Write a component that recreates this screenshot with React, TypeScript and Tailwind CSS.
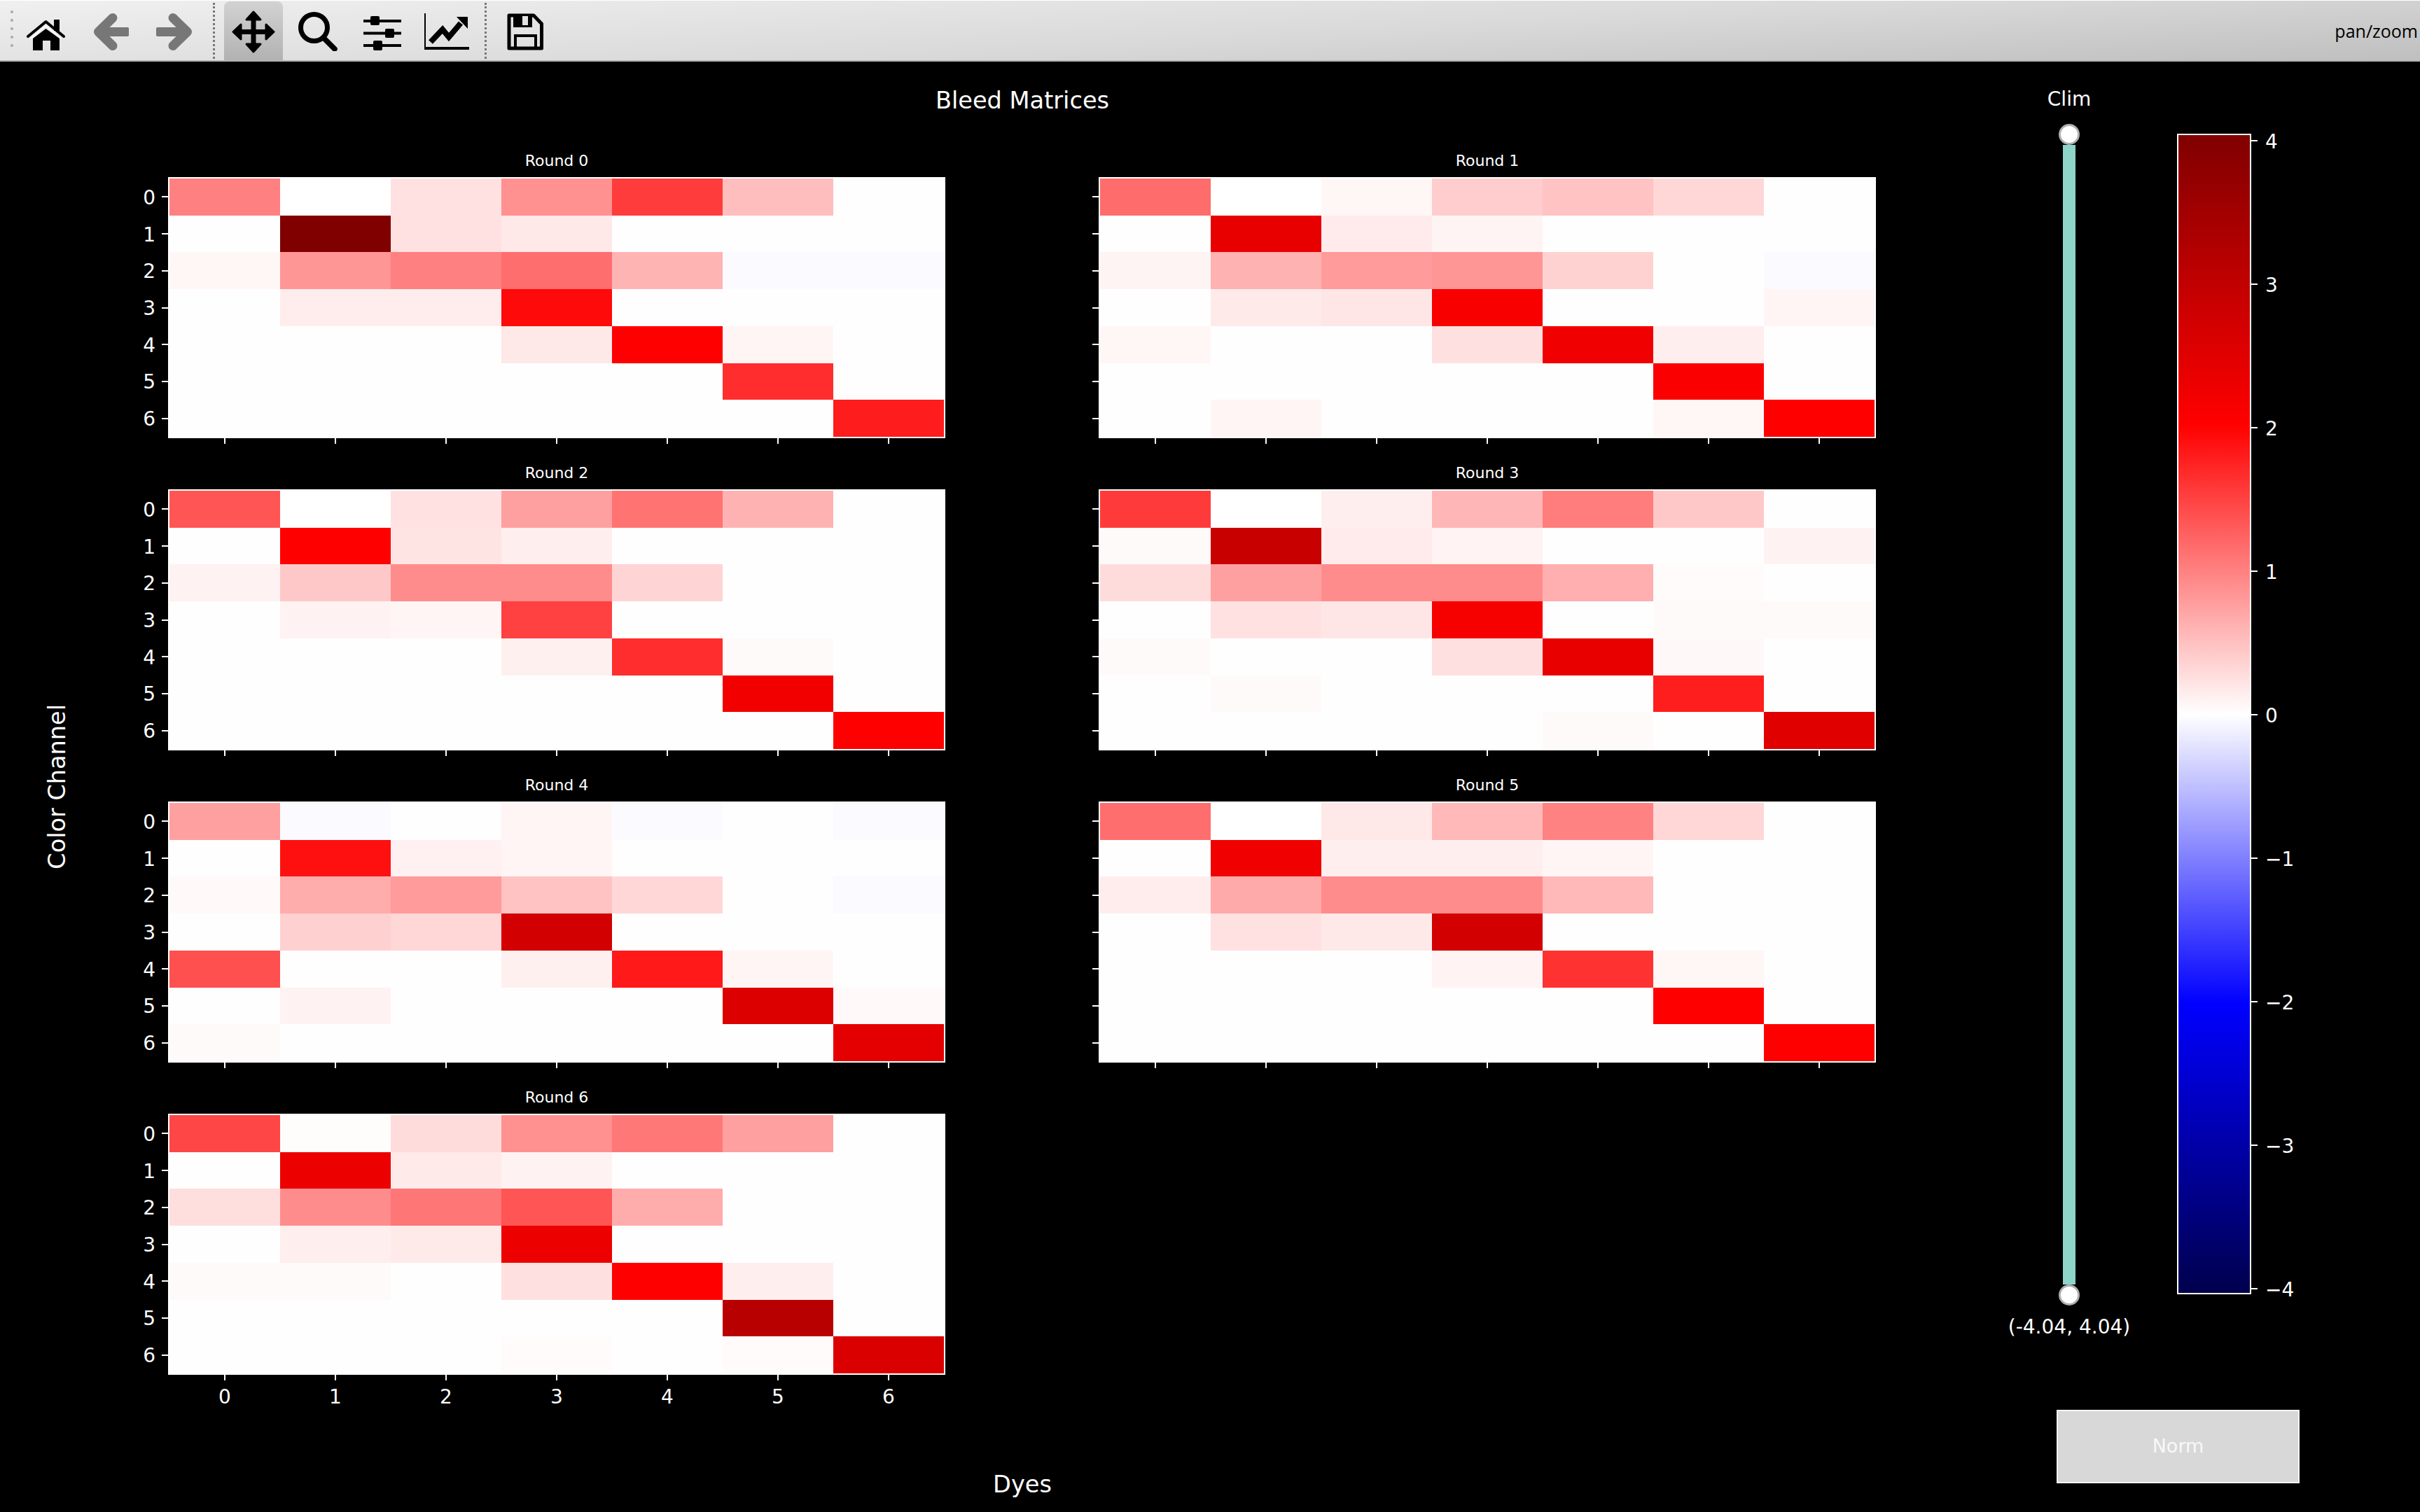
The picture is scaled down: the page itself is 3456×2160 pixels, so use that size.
import React from "react";

// cell codes: 0-255 = green/blue level of a red tint, negative = dark red channel, B = faint blue
const W = 254;
const B = 1000;

const rounds: number[][][] = [
  [
    [128, 255, 225, 145, 60, 190, W],
    [W, -128, 225, 232, W, W, W],
    [246, 150, 128, 110, 180, B, B],
    [W, 237, 237, 10, W, W, W],
    [W, W, W, 232, 0, 245, W],
    [W, W, W, W, W, 45, W],
    [W, W, W, W, W, W, 28],
  ],
  [
    [108, 255, 246, 205, 195, 215, W],
    [W, -232, 235, 244, W, W, W],
    [244, 178, 155, 150, 210, W, B],
    [W, 234, 230, -248, W, W, 245],
    [246, W, W, 224, -240, 238, W],
    [W, W, W, W, W, -250, W],
    [W, 245, W, W, W, 246, 0],
  ],
  [
    [85, 255, 225, 160, 115, 178, W],
    [W, 0, 228, 238, W, W, W],
    [242, 200, 140, 140, 212, W, W],
    [W, 242, 245, 65, W, W, W],
    [W, W, W, 240, 45, 250, W],
    [W, W, W, W, W, -242, W],
    [W, W, W, W, W, W, 0],
  ],
  [
    [58, 255, 238, 182, 125, 200, W],
    [250, -200, 235, 243, W, W, 242],
    [220, 160, 140, 140, 175, 251, W],
    [W, 225, 230, -246, W, 250, 250],
    [250, W, W, 224, -232, 248, W],
    [W, 250, W, W, W, 30, W],
    [W, W, W, W, 250, W, -224],
  ],
  [
    [160, B, W, 245, B, W, B],
    [W, 16, 241, 245, W, W, W],
    [249, 172, 155, 195, 215, W, B],
    [W, 208, 215, -210, W, W, W],
    [80, W, W, 240, 25, 245, W],
    [W, 242, W, W, W, -220, 249],
    [250, W, W, W, W, W, -228],
  ],
  [
    [110, 255, 232, 185, 130, 215, W],
    [W, -240, 238, 238, 245, W, W],
    [237, 170, 140, 140, 185, W, W],
    [W, 225, 232, -210, W, W, W],
    [W, W, W, 243, 50, 246, W],
    [W, W, W, W, W, 0, W],
    [W, W, W, W, W, W, 0],
  ],
  [
    [70, 252, 220, 145, 120, 160, W],
    [W, -236, 234, 242, W, W, W],
    [222, 140, 118, 85, 172, W, W],
    [W, 238, 234, -236, W, W, W],
    [250, 250, W, 224, 0, 238, W],
    [W, W, W, W, W, -184, W],
    [W, W, W, 251, W, 251, -218],
  ],
];

const idx = [0, 1, 2, 3, 4, 5, 6];
const barTicks = ["4", "3", "2", "1", "0", "−1", "−2", "−3", "−4"];

function cellColor(n: number) {
  if (n === B) return "#fafaff";
  if (n < 0) return `rgb(${-n},0,0)`;
  return `rgb(255,${n},${n})`;
}

function Plot({ round, yLabels, xLabels }: { round: number; yLabels: boolean; xLabels: boolean }) {
  return (
    <div className="flex flex-col">
      <div className="ml-[60px] h-[50px] w-[1110px] pt-[13px] text-center text-[22px] leading-[28px] text-white">
        Round {round}
      </div>
      <div className="flex h-[373px]">
        <div className="flex w-[60px] flex-col py-[2px]">
          {idx.map((i) => (
            <div key={i} className="flex flex-1 items-center justify-end">
              {yLabels && <span className="mr-[9px] pt-[3px] text-[28px] leading-none text-white">{i}</span>}
              <div className="h-[2px] w-[9px] bg-white" />
            </div>
          ))}
        </div>
        <div className="grid w-[1110px] grid-cols-7 grid-rows-7 border-2 border-white bg-white">
          {rounds[round].flat().map((n, i) => (
            <div key={i} style={{ backgroundColor: cellColor(n) }} />
          ))}
        </div>
      </div>
      <div className="ml-[60px] grid min-h-[23px] w-[1110px] grid-cols-7 px-[2px]">
        {idx.map((i) => (
          <div key={i} className="flex flex-col items-center">
            <div className="h-[8px] w-[2px] bg-white" />
            {xLabels && <span className="mt-[7px] text-[28px] leading-[34px] text-white">{i}</span>}
          </div>
        ))}
      </div>
    </div>
  );
}

function HomeIcon() {
  return (
    <svg width="55" height="44" viewBox="0 0 55 44" className="mt-[27px] ml-[19px]">
      <rect x="39" y="0" width="8" height="16" fill="#000" />
      <path d="M9 44V27L27.5 13 47 27V44H34V30H23V44Z" fill="#000" />
      <path d="M6 27 27.5 9 49 27" fill="none" stroke="#fff" strokeWidth="2" />
      <path d="M2 24 27.5 3 53 24" fill="none" stroke="#000" strokeWidth="4" strokeLinecap="round" strokeLinejoin="round" />
    </svg>
  );
}

function BackIcon() {
  return (
    <svg width="50" height="53" viewBox="0 0 50 53" className="mt-[18px] ml-[41px]">
      <path d="M27 6.5 6.5 26.5 27 46.5" fill="none" stroke="#777" strokeWidth="13" strokeLinecap="round" strokeLinejoin="round" />
      <path d="M8 26.5H46" stroke="#777" strokeWidth="13" strokeLinecap="round" strokeLinejoin="round" />
      <rect x="36" y="20" width="14" height="13" rx="2" fill="#777" />
    </svg>
  );
}

function ForwardIcon() {
  return (
    <svg width="51" height="53" viewBox="0 0 51 53" className="mt-[18px] ml-[39px]">
      <path d="M24 6.5 44.5 26.5 24 46.5" fill="none" stroke="#777" strokeWidth="13" strokeLinecap="round" strokeLinejoin="round" />
      <path d="M43 26.5H5" stroke="#777" strokeWidth="13" strokeLinecap="round" strokeLinejoin="round" />
      <rect x="0" y="20" width="14" height="13" rx="2" fill="#777" />
    </svg>
  );
}

function MoveIcon() {
  return (
    <svg width="62" height="61" viewBox="0 0 62 61">
      <path d="M31 8V53M8 30.5H54" stroke="#000" strokeWidth="7" />
      <path d="M31 2 41 13H21ZM31 59 41 48H21ZM2 30.5 13 20V41ZM60 30.5 49 20V41Z" fill="#000" stroke="#000" strokeWidth="3" strokeLinejoin="round" />
    </svg>
  );
}

function ZoomIcon() {
  return (
    <svg width="56" height="56" viewBox="0 0 56 56" className="mt-[16px] ml-[22px]">
      <circle cx="22.5" cy="22.5" r="19" fill="none" stroke="#000" strokeWidth="7" />
      <path d="M37 38 52 53" stroke="#000" strokeWidth="7.5" strokeLinecap="round" />
    </svg>
  );
}

function SlidersIcon() {
  return (
    <svg width="54" height="49" viewBox="0 0 54 49" className="mt-[22px] ml-[37px]">
      <path d="M0 7H54M0 24.5H54M0 42H54" stroke="#000" strokeWidth="4" />
      <rect x="10" y="0" width="13" height="13" rx="2" fill="#000" />
      <rect x="31" y="18" width="13" height="13" rx="2" fill="#000" />
      <rect x="14" y="35" width="13" height="14" rx="2" fill="#000" />
    </svg>
  );
}

function ChartIcon() {
  return (
    <svg width="64" height="53" viewBox="0 0 64 53" className="mt-[18px] ml-[33px]">
      <path d="M1 0V52" stroke="#000" strokeWidth="2" />
      <path d="M0 50H64" stroke="#000" strokeWidth="4" />
      <path d="M9 41 26 23 35 34 52 14" fill="none" stroke="#000" strokeWidth="8" />
      <path d="M62 5H46L62 22Z" fill="#000" />
    </svg>
  );
}

function SaveIcon() {
  return (
    <svg width="52" height="53" viewBox="0 0 52 53" className="mt-[18px] ml-[29px]">
      <path d="M3 3H38L49.5 15V50H3Z" fill="none" stroke="#000" strokeWidth="5" strokeLinejoin="round" />
      <rect x="9" y="3" width="27" height="17" fill="#000" />
      <rect x="22" y="4" width="8" height="13" fill="#e2e2e2" />
      <rect x="12" y="32" width="29" height="18" fill="none" stroke="#000" strokeWidth="4" />
    </svg>
  );
}

function Separator({ className }: { className: string }) {
  return <div className={`mt-[3px] h-[80px] w-0 border-l-[3px] border-dotted border-[#777] ${className}`} />;
}

function Toolbar() {
  return (
    <div className="flex h-[88px] shrink-0 border-t border-b-2 border-t-white border-b-[#b4b4b4] bg-[linear-gradient(177deg,#f0f0f0,#d9d9d9_55%,#bfbfbf)]">
      <div className="mt-[14px] ml-[14px] flex w-[5px] flex-col items-center gap-[8px]">
        {[0, 1, 2, 3, 4].map((i) => (
          <div key={i} className="size-[4px] rounded-full bg-[#a8a8a8]" />
        ))}
      </div>
      <HomeIcon />
      <BackIcon />
      <ForwardIcon />
      <Separator className="ml-[30px]" />
      <div className="mt-px ml-[13px] flex h-[84px] w-[84px] items-start justify-center rounded-t-[8px] bg-[linear-gradient(to_bottom,#d2d2d2,#b2b2b2)] pt-[13px]">
        <MoveIcon />
      </div>
      <ZoomIcon />
      <SlidersIcon />
      <ChartIcon />
      <Separator className="ml-[22px]" />
      <SaveIcon />
      <div className="ml-auto pt-[28px] pr-[3px] font-['Open_Sans',sans-serif] text-[25px] leading-[30px] text-black">
        pan/zoom
      </div>
    </div>
  );
}

function SidePanel() {
  return (
    <div className="flex w-[576px] flex-col pt-[37px]">
      <div className="flex items-start">
        <div className="flex w-[150px] flex-col items-center text-[28px] leading-[34px] text-white">
          <span>Clim</span>
          <div className="mt-[18px] size-[30px] rounded-full border-[3px] border-[#b0b0b0] bg-white" />
          <div className="h-[1628px] w-[18px] bg-[#8fd4c8]" />
          <div className="size-[30px] rounded-full border-[3px] border-[#b0b0b0] bg-white" />
          <span className="mt-[14px] whitespace-nowrap">(-4.04, 4.04)</span>
        </div>
        <div className="mt-[66px] ml-[79px] h-[1658px] w-[106px] border-2 border-white bg-[linear-gradient(to_bottom,#800000,#ff0000_25%,#ffffff_50%,#0000ff_75%,#00004d)]" />
        <div className="mt-[67px] flex h-[1658px] flex-col justify-between py-[8px]">
          {barTicks.map((t) => (
            <div key={t} className="flex h-[2px] items-center">
              <div className="h-[2px] w-[9px] bg-white" />
              <span className="ml-[11px] pt-[3px] text-[28px] leading-none text-white">{t}</span>
            </div>
          ))}
        </div>
      </div>
      <button className="mt-[101px] ml-[57px] flex h-[105px] w-[347px] items-center justify-center border-2 border-[#f4f4f4] bg-[#d8d8d8] text-[27px] text-[#f8f8f8]">
        Norm
      </button>
    </div>
  );
}

export default function App() {
  return (
    <div className="flex h-[2160px] w-[3456px] flex-col overflow-hidden bg-black font-['DejaVu_Sans',sans-serif]">
      <Toolbar />
      <div className="flex flex-1">
        <div className="flex w-[180px] items-center justify-center pr-[16px]">
          <span className="rotate-180 text-[33.5px] leading-[40px] whitespace-nowrap text-white [writing-mode:vertical-rl]">
            Color Channel
          </span>
        </div>
        <div className="flex w-[2700px] flex-col">
          <div className="h-[115px] w-[2560px] pt-[37px] text-center text-[33.6px] leading-[38px] text-white">
            Bleed Matrices
          </div>
          <div className="grid w-[2499px] grid-cols-[1170px_1170px] justify-between">
            {rounds.map((_, r) => (
              <Plot key={r} round={r} yLabels={r % 2 === 0} xLabels={r === 6} />
            ))}
          </div>
          <div className="mt-[89px] w-[2560px] text-center text-[33.6px] leading-[38px] text-white">Dyes</div>
        </div>
        <SidePanel />
      </div>
    </div>
  );
}
